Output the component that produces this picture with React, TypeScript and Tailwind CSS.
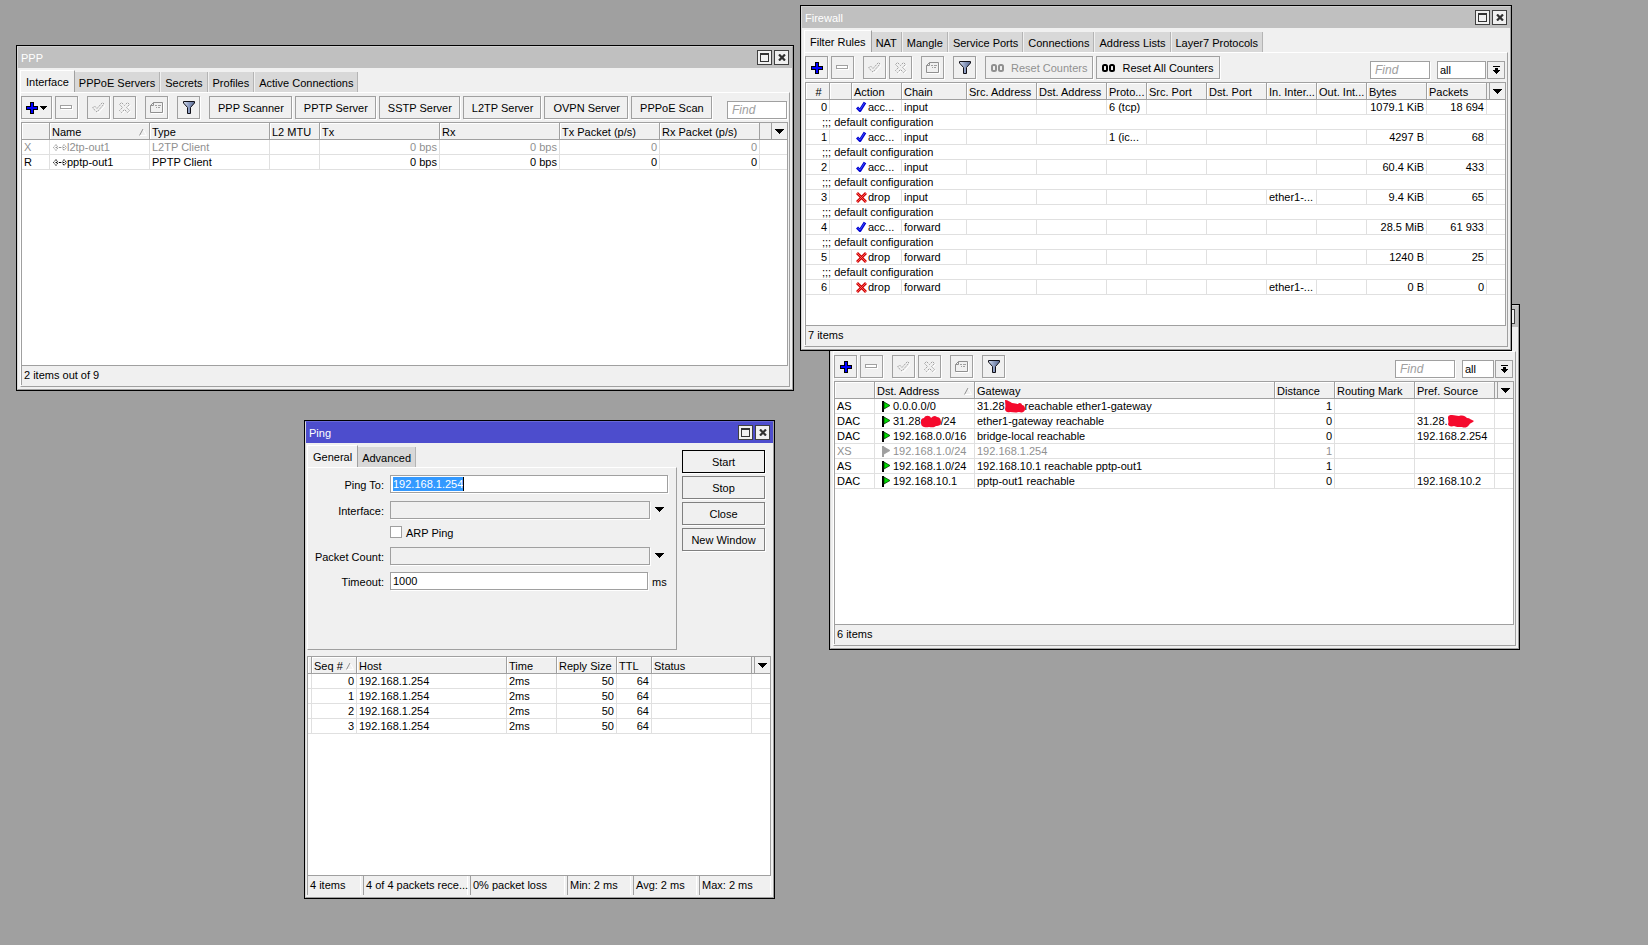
import type { ReactNode } from "react";

/* ---------- icons ---------- */

const PlusIcon = () => (
  <svg width="12" height="12" viewBox="0 0 12 12" shapeRendering="crispEdges" aria-hidden="true">
    <path d="M4 0h4v4h4v4H8v4H4V8H0V4h4z" fill="#000" />
    <path d="M5 1h2v4h4v2H7v4H5V7H1V5h4z" fill="#0000ff" />
  </svg>
);

const MinusIcon = () => (
  <svg width="13" height="5" viewBox="0 0 13 5" shapeRendering="crispEdges" aria-hidden="true">
    <path d="M1 1h12v4H1z" fill="#fff" />
    <path d="M0 0h12v4H0zM1 1v2h10V1z" fill="#a0a0a0" fillRule="evenodd" />
  </svg>
);

const EnableIcon = () => (
  <svg width="13" height="12" viewBox="0 0 13 12" aria-hidden="true">
    <path d="M1.500 6.500l2-1.500L5.500 7 10 1.500l2 1L5.500 10z" transform="translate(1 1)" stroke="#fff" fill="none" />
    <path d="M.5 6l2-2L5 6.500 10.500 .5l1.500 1.500L5 10z" fill="#f0f0f0" stroke="#a0a0a0" strokeDasharray="2 1" />
  </svg>
);

const DisableIcon = () => (
  <svg width="12" height="12" viewBox="0 0 12 12" aria-hidden="true">
    <path d="M1.500 3.500l2-2 3 3 3-3 2 2-3 3 3 3-2 2-3-3-3 3-2-2 3-3z" fill="none" stroke="#fff" />
    <path d="M.5 2.500l2-2 3 3 3-3 2 2-3 3 3 3-2 2-3-3-3 3-2-2 3-3z" fill="#f0f0f0" stroke="#a0a0a0" strokeDasharray="2 1" />
  </svg>
);

const CommentIcon = () => (
  <svg width="14" height="12" viewBox="0 0 14 12" aria-hidden="true">
    <path d="M3.500 .5h9v10H.5V3.500z" fill="#f0f0f0" stroke="#909090" />
    <path d="M3.500 .5v3h-3" fill="none" stroke="#909090" />
    <path d="M13.500 1v10.500H1" fill="none" stroke="#fff" />
    <path d="M5 3.500h2M8 3.500h3M6 5.500h1M8 5.500h2" stroke="#a0a0a0" />
  </svg>
);

const FunnelIcon = () => (
  <svg width="12" height="13" viewBox="0 0 12 13" aria-hidden="true">
    <defs>
      <linearGradient id="funnel" x1="0" x2="1" y1="0" y2="0">
        <stop offset="0" stopColor="#d8e0f0" />
        <stop offset=".5" stopColor="#8c9cc0" />
        <stop offset="1" stopColor="#5c6c94" />
      </linearGradient>
    </defs>
    <path d="M.5 .5h11v1.500L7.500 6.500v6h-3v-6L.5 2z" fill="url(#funnel)" stroke="#101018" />
  </svg>
);

const Caret = () => (
  <svg width="9" height="5" viewBox="0 0 9 5" shapeRendering="crispEdges" aria-hidden="true">
    <path d="M0 0h9v1H8v1H7v1H6v1H5v1H4V4H3V3H2V2H1V1H0z" />
  </svg>
);

const SmallCaret = () => (
  <svg width="7" height="4" viewBox="0 0 7 4" shapeRendering="crispEdges" aria-hidden="true">
    <path d="M0 0h7v1H6v1H5v1H4v1H3V3H2V2H1V1H0z" />
  </svg>
);

const BarCaret = () => (
  <svg width="7" height="8" viewBox="0 0 7 8" shapeRendering="crispEdges" aria-hidden="true">
    <path d="M0 0h7v1H0zM2 2h3v2h2v1H6v1H5v1H4v1H3V7H2V6H1V5H0V4h2z" />
  </svg>
);

const SortIcon = () => (
  <svg width="8" height="7" viewBox="0 0 8 7" aria-hidden="true" className="shrink-0">
    <path d="M4 0L7.500 6.500H0" fill="none" stroke="#fff" />
    <path d="M4 0L.5 6.500" stroke="#909090" />
  </svg>
);

const CountersIcon = () => (
  <svg width="14" height="8" viewBox="0 0 14 8" aria-hidden="true" className="shrink-0">
    <rect x="1" y="1" width="4" height="6" rx="1.500" fill="none" stroke="currentColor" strokeWidth="2" />
    <rect x="8" y="1" width="4" height="6" rx="1.500" fill="none" stroke="currentColor" strokeWidth="2" />
  </svg>
);

const LinkIcon = () => (
  <svg width="14" height="7" viewBox="0 0 14 7" aria-hidden="true" className="shrink-0">
    <path d="M3 .5l2 3-2 3-2.500-3zM11 .5l2.500 3-2.500 3-2-3z" fill="none" stroke="currentColor" strokeDasharray="1.400 .7" />
    <path d="M2.500 3.500h1.500M6 3.500h2M10 3.500h1.500" stroke="currentColor" />
  </svg>
);

const AcceptIcon = () => (
  <svg width="11" height="12" viewBox="0 0 11 12" aria-hidden="true" className="shrink-0">
    <path d="M1 6.500L4 9.500 9 1.500" fill="none" stroke="#0000d0" strokeWidth="3" strokeLinejoin="round" />
    <path d="M1.500 7L4 9 8.500 2" fill="none" stroke="#4a5cff" strokeWidth=".8" />
  </svg>
);

const DropIcon = () => (
  <svg width="11" height="11" viewBox="0 0 11 11" aria-hidden="true" className="shrink-0">
    <path d="M1 1l9 9M10 1L1 10" stroke="#d00000" strokeWidth="2.800" />
    <path d="M1 1l9 9M10 1L1 10" stroke="#ff7070" strokeWidth=".8" />
  </svg>
);

const FlagIcon = ({ off }: { off?: boolean }) => (
  <svg width="9" height="11" viewBox="0 0 9 11" aria-hidden="true" className="shrink-0">
    <path d="M0 0h2v11H0z" fill={off ? "#a0a0a0" : "#000"} />
    <path d="M2 1l6 3.500L2 8z" fill={off ? "#a0a0a0" : "#00dc00"} stroke={off ? "#a0a0a0" : "#003c00"} strokeWidth=".8" />
  </svg>
);

const Scribble = ({ d, w }: { d: string; w: number }) => (
  <svg width={w} height="13" viewBox={`0 0 ${w} 13`} aria-hidden="true" className="shrink-0">
    <path d={d} fill="#f50a2d" />
  </svg>
);

/* ---------- window parts ---------- */

const WindowButtons = () => (
  <div className="flex gap-0.5">
    <button aria-label="Maximize" className="flex size-[15px] items-center justify-center border border-[#404040] bg-[#f0f0f0]">
      <svg width="9" height="9" viewBox="0 0 9 9" shapeRendering="crispEdges" aria-hidden="true">
        <path d="M0 0h9v9H0zM1 2v6h7V2z" fill="#333" fillRule="evenodd" />
      </svg>
    </button>
    <button aria-label="Close" className="flex size-[15px] items-center justify-center border border-[#404040] bg-[#f0f0f0]">
      <svg width="8" height="7" viewBox="0 0 8 7" aria-hidden="true">
        <path d="M1 .5l6 6M7 .5l-6 6" stroke="#303030" strokeWidth="2.200" />
      </svg>
    </button>
  </div>
);

const Window = ({ title, place, active, children }: { title?: string; place: string; active?: boolean; children: ReactNode }) => (
  <section className={`absolute flex border border-black ${place}`}>
    <div className={`flex min-w-0 flex-1 flex-col border bg-[#f0f0f0] ${active ? "border-[#a0a0a0] border-t-[#6868d8] border-l-[#d8d8d8]" : "border-[#a0a0a0] border-t-[#d0d0d0] border-l-[#d8d8d8]"}`}>
      <header className={`flex h-[21px] shrink-0 items-center justify-between pr-[3px] pl-[3px] text-white ${active ? "bg-[#4d4dcd]" : "bg-[#c0c0c0]"}`}>
        <h2>{title}</h2>
        <WindowButtons />
      </header>
      {children}
    </div>
  </section>
);

const Tabs = ({ items }: { items: string[] }) => (
  <div role="tablist" className="flex h-[22px] shrink-0 items-end whitespace-nowrap">
    {items.map((t, i) =>
      i === 0 ? (
        <button key={t} role="tab" aria-selected="true" className="h-[22px] border-t border-r border-l border-white border-r-[#a0a0a0] px-[5px]">
          {t}
        </button>
      ) : (
        <button key={t} role="tab" aria-selected="false" className="mr-px h-5 border-r border-[#b4b4b4] bg-[#d8d8d8] pt-px pr-1 pl-1">
          {t}
        </button>
      )
    )}
  </div>
);

const ToolButton = ({ label, children, first }: { label: string; children: ReactNode; first?: boolean }) => (
  <button aria-label={label} className={`flex h-[23px] shrink-0 items-center justify-center gap-0.5 border border-[#a0a0a0] bg-[#f0f0f0] shadow-[1px_1px_0_#fff] ${first ? "w-[31px]" : "w-[23px]"}`}>
    {children}
  </button>
);

const TextButton = ({ children, off, icon }: { children: ReactNode; off?: boolean; icon?: boolean }) => (
  <button disabled={off} className={`flex h-[23px] shrink-0 items-center gap-1.5 border border-[#a0a0a0] bg-[#f0f0f0] whitespace-nowrap shadow-[1px_1px_0_#fff] ${icon ? "px-[5px]" : "pr-[7px] pl-2"} ${off ? "text-[#909090]" : ""}`}>
    {children}
  </button>
);

const Toolbar = ({ menu, children, filter }: { menu?: boolean; children?: ReactNode; filter?: string }) => (
  <div className="flex shrink-0 items-end justify-between pt-[3px] pb-[3px]">
    <div className="flex gap-[9px]">
      <div className="flex gap-[3px]">
        <ToolButton label="Add" first={menu}>
          <PlusIcon />
          {menu && <SmallCaret />}
        </ToolButton>
        <ToolButton label="Remove"><MinusIcon /></ToolButton>
      </div>
      <div className="flex gap-[3px]">
        <ToolButton label="Enable"><EnableIcon /></ToolButton>
        <ToolButton label="Disable"><DisableIcon /></ToolButton>
      </div>
      <ToolButton label="Comment"><CommentIcon /></ToolButton>
      <ToolButton label="Filter"><FunnelIcon /></ToolButton>
      <div className="flex gap-[3px]">{children}</div>
    </div>
    <div className="flex pr-0.5">
      <input aria-label="Find" placeholder="Find" className="h-[18px] w-[60px] border border-[#a0a0a0] bg-white px-1 text-[12px] italic shadow-[1px_1px_0_#fff] outline-none placeholder:text-[#a0a0a0]" />
      {filter && (
        <>
          <select aria-label="Filter by" className={`ml-[7px] h-[18px] appearance-none border border-[#a0a0a0] bg-white pl-0.5 leading-4 ${filter}`}>
            <option>all</option>
          </select>
          <button aria-label="Open list" className="ml-px flex h-[18px] w-[18px] items-center justify-center border border-[#a0a0a0]">
            <BarCaret />
          </button>
        </>
      )}
    </div>
  </div>
);

type Col = { h: ReactNode; w: string; right?: boolean; sort?: boolean; center?: boolean };
type Row = { cells: ReactNode[]; off?: boolean } | { note: string };

const DataTable = ({ cols, rows, label }: { cols: Col[]; rows: Row[]; label: string }) => (
  <div className="min-h-0 flex-1 overflow-hidden border border-[#a0a0a0] bg-white">
    <table aria-label={label} className="w-full table-fixed border-separate border-spacing-0 whitespace-nowrap">
      <colgroup>
        {cols.map((c, i) => (
          <col key={i} className={c.w} />
        ))}
        <col />
      </colgroup>
      <thead>
        <tr>
          {cols.map((c, i) => (
            <th key={i} className="h-[17px] border-r border-b border-[#a0a0a0] bg-[#f0f0f0] p-0 text-left font-normal shadow-[inset_1px_1px_0_#fff]">
              <div className={`flex h-4 items-center pt-0.5 pl-0.5 leading-[14px] ${c.sort ? "justify-between pr-0.5" : ""} ${c.center ? "justify-center" : ""}`}>
                <span>{c.h}</span>
                {c.sort && <SortIcon />}
              </div>
            </th>
          ))}
          <th className="h-[17px] border-b border-[#a0a0a0] bg-[#f0f0f0] p-0">
            <button aria-label="Choose columns" className="ml-auto flex h-4 w-4 items-center justify-center border-l border-[#a0a0a0]">
              <Caret />
            </button>
          </th>
        </tr>
      </thead>
      <tbody>
        {rows.map((r, i) =>
          "note" in r ? (
            <tr key={i}>
              <td colSpan={cols.length + 1} className="h-[15px] border-b border-[#e0e0e0] p-0 pl-4 leading-[14px]">
                {r.note}
              </td>
            </tr>
          ) : (
            <tr key={i} className={r.off ? "text-[#909090]" : ""}>
              {cols.map((c, j) => (
                <td key={j} className={`h-[15px] border-r border-b border-[#e0e0e0] p-0 leading-[14px] ${c.right ? "pr-0.5 text-right" : "pl-0.5"}`}>
                  {r.cells[j]}
                </td>
              ))}
              <td className="h-[15px] border-b border-[#e0e0e0] p-0" />
            </tr>
          )
        )}
      </tbody>
    </table>
  </div>
);

const TabbedBody = ({ tabs, toolbar, table, status }: { tabs: string[]; toolbar: ReactNode; table: ReactNode; status: string }) => (
  <div className="flex min-h-0 flex-1 flex-col px-0.5 pt-0.5 pb-0.5">
    <Tabs items={tabs} />
    <div className="flex min-h-0 flex-1 flex-col border border-white border-r-[#a0a0a0] border-b-[#a0a0a0]">
      {toolbar}
      <div className="mr-px mb-px flex min-h-0 flex-1 flex-col">
        {table}
        <footer className="h-[19px] shrink-0 border-l border-[#a0a0a0] pl-0.5 leading-[19px]">{status}</footer>
      </div>
    </div>
  </div>
);

/* ---------- data ---------- */

const pppCols: Col[] = [
  { h: "", w: "w-[28px]" },
  { h: "Name", w: "w-[100px]", sort: true },
  { h: "Type", w: "w-[120px]" },
  { h: "L2 MTU", w: "w-[50px]" },
  { h: "Tx", w: "w-[120px]", right: true },
  { h: "Rx", w: "w-[120px]", right: true },
  { h: "Tx Packet (p/s)", w: "w-[100px]", right: true },
  { h: "Rx Packet (p/s)", w: "w-[100px]", right: true },
];

const iface = (name: string) => (
  <span className="flex items-center pl-px">
    <LinkIcon />
    {name}
  </span>
);

const pppRows: Row[] = [
  { off: true, cells: ["X", iface("l2tp-out1"), "L2TP Client", "", "0 bps", "0 bps", "0", "0"] },
  { cells: ["R", iface("pptp-out1"), "PPTP Client", "", "0 bps", "0 bps", "0", "0"] },
];

const fwCols: Col[] = [
  { h: "#", w: "w-[24px]", right: true, center: true },
  { h: "", w: "w-[22px]" },
  { h: "Action", w: "w-[50px]" },
  { h: "Chain", w: "w-[65px]" },
  { h: "Src. Address", w: "w-[70px]" },
  { h: "Dst. Address", w: "w-[70px]" },
  { h: "Proto...", w: "w-[40px]" },
  { h: "Src. Port", w: "w-[60px]" },
  { h: "Dst. Port", w: "w-[60px]" },
  { h: "In. Inter...", w: "w-[50px]" },
  { h: "Out. Int...", w: "w-[50px]" },
  { h: "Bytes", w: "w-[60px]", right: true },
  { h: "Packets", w: "w-[60px]", right: true },
];

const accept = <span className="flex h-[14px] items-center gap-px pl-0.5"><AcceptIcon />acc...</span>;
const drop = <span className="flex h-[14px] items-center gap-px pl-0.5"><DropIcon />drop</span>;
const rule = (n: string, action: ReactNode, chain: string, proto: string, inIf: string, bytes: string, packets: string): Row => ({
  cells: [n, "", action, chain, "", "", proto, "", "", inIf, "", bytes, packets],
});
const note: Row = { note: ";;; default configuration" };

const fwRows: Row[] = [
  rule("0", accept, "input", "6 (tcp)", "", "1079.1 KiB", "18 694"),
  note,
  rule("1", accept, "input", "1 (ic...", "", "4297 B", "68"),
  note,
  rule("2", accept, "input", "", "", "60.4 KiB", "433"),
  note,
  rule("3", drop, "input", "", "ether1-...", "9.4 KiB", "65"),
  note,
  rule("4", accept, "forward", "", "", "28.5 MiB", "61 933"),
  note,
  rule("5", drop, "forward", "", "", "1240 B", "25"),
  note,
  rule("6", drop, "forward", "", "ether1-...", "0 B", "0"),
];

const routeCols: Col[] = [
  { h: "", w: "w-[40px]" },
  { h: "Dst. Address", w: "w-[100px]", sort: true },
  { h: "Gateway", w: "w-[300px]" },
  { h: "Distance", w: "w-[60px]", right: true },
  { h: "Routing Mark", w: "w-[80px]" },
  { h: "Pref. Source", w: "w-[80px]" },
];

const dst = (children: ReactNode, off?: boolean) => (
  <span className="flex h-[14px] items-center">
    <span className="flex w-4 shrink-0 justify-end pr-0.5"><FlagIcon off={off} /></span>
    {children}
  </span>
);

const routeRows: Row[] = [
  {
    cells: [
      "AS",
      dst("0.0.0.0/0"),
      <span className="flex h-[14px] items-center">
        31.28
        <Scribble w={20} d="M0 0C3 0 5 2 7 3c3 0 4 1 6 1 1-2 4-1 4 1 2 0 3 2 3 4 0 3-3 4-6 3-4 1-6 0-9 0-3 1-5-1-5-3 1-3 0-6 0-9z" />
        reachable ether1-gateway
      </span>,
      "1",
      "",
      "",
    ],
  },
  {
    cells: [
      "DAC",
      dst(
        <>
          31.28
          <Scribble w={20} d="M0 8C-1 5 1 3 3 3 4 0 9 0 10 3c2-2 4-3 6-1 3 0 4 3 4 5 0 3-2 4-5 4-2 2-5 1-7 1-4 1-8 0-8-4z" />
          /24
        </>
      ),
      "ether1-gateway reachable",
      "0",
      "",
      <span className="flex h-[14px] items-center">
        31.28.
        <Scribble w={26} d="M0 3C0 0 2 0 4 0c3 0 4 1 7 1 4-1 6 0 8 2 3 0 4 2 7 3-2 2-4 2-5 4-2 3-5 3-7 2-4 0-6 0-8-1-3 1-6 0-6-2 1-2 0-4 0-6z" />
      </span>,
    ],
  },
  { cells: ["DAC", dst("192.168.0.0/16"), "bridge-local reachable", "0", "", "192.168.2.254"] },
  { off: true, cells: ["XS", dst("192.168.1.0/24", true), "192.168.1.254", "1", "", ""] },
  { cells: ["AS", dst("192.168.1.0/24"), "192.168.10.1 reachable pptp-out1", "1", "", ""] },
  { cells: ["DAC", dst("192.168.10.1"), "pptp-out1 reachable", "0", "", "192.168.10.2"] },
];

const pingCols: Col[] = [
  { h: "", w: "w-[4px]" },
  { h: "Seq #", w: "w-[45px]", right: true, sort: true },
  { h: "Host", w: "w-[150px]" },
  { h: "Time", w: "w-[50px]" },
  { h: "Reply Size", w: "w-[60px]", right: true },
  { h: "TTL", w: "w-[35px]", right: true },
  { h: "Status", w: "w-[100px]" },
];

const pingRows: Row[] = ["0", "1", "2", "3"].map((n) => ({ cells: ["", n, "192.168.1.254", "2ms", "50", "64", ""] }));

const pingStatus = [
  { t: "4 items", w: "w-[54px]" },
  { t: "4 of 4 packets rece...", w: "w-[105px]" },
  { t: "0% packet loss", w: "w-[95px]" },
  { t: "Min: 2 ms", w: "w-16" },
  { t: "Avg: 2 ms", w: "w-16" },
  { t: "Max: 2 ms", w: "flex-1" },
];

const field = "h-[18px] border border-[#a0a0a0] shadow-[1px_1px_0_#fff]";
const caption = "text-right leading-[20px] whitespace-nowrap";

/* ---------- page ---------- */

export default function App() {
  return (
    <main className="relative min-h-screen overflow-hidden bg-[#a0a0a0] font-['Liberation_Sans',Arial,sans-serif] text-[11px] leading-[14px] text-black">
      <Window title="PPP" place="left-[16px] top-[45px] h-[346px] w-[778px]">
        <TabbedBody
          tabs={["Interface", "PPPoE Servers", "Secrets", "Profiles", "Active Connections"]}
          toolbar={
            <Toolbar menu>
              {["PPP Scanner", "PPTP Server", "SSTP Server", "L2TP Server", "OVPN Server", "PPPoE Scan"].map((t) => (
                <TextButton key={t}>{t}</TextButton>
              ))}
            </Toolbar>
          }
          table={<DataTable label="PPP interfaces" cols={pppCols} rows={pppRows} />}
          status="2 items out of 9"
        />
      </Window>

      <Window place="left-[829px] top-[304px] h-[346px] w-[691px]">
        <TabbedBody
          tabs={[]}
          toolbar={<Toolbar filter="w-[32px]" />}
          table={<DataTable label="Routes" cols={routeCols} rows={routeRows} />}
          status="6 items"
        />
      </Window>

      <Window title="Firewall" place="left-[800px] top-[5px] h-[346px] w-[712px]">
        <TabbedBody
          tabs={["Filter Rules", "NAT", "Mangle", "Service Ports", "Connections", "Address Lists", "Layer7 Protocols"]}
          toolbar={
            <Toolbar filter="w-[49px]">
              <TextButton off icon><CountersIcon />Reset Counters</TextButton>
              <TextButton icon><CountersIcon />Reset All Counters</TextButton>
            </Toolbar>
          }
          table={<DataTable label="Filter rules" cols={fwCols} rows={fwRows} />}
          status="7 items"
        />
      </Window>

      <Window active title="Ping" place="left-[304px] top-[420px] h-[479px] w-[471px]">
        <div className="flex min-h-0 flex-1 flex-col pt-0.5 pr-0.5 pl-px">
          <div className="flex">
            <div className="flex min-w-0 flex-1 flex-col">
              <Tabs items={["General", "Advanced"]} />
              <form className="grid h-[183px] grid-cols-[76px_1fr] content-start gap-x-1.5 border border-white border-r-[#a0a0a0] border-b-[#a0a0a0] pt-[7px] pr-2">
                <label htmlFor="ping-to" className={`h-[26px] ${caption}`}>Ping To:</label>
                <div className={`flex items-center bg-white pl-0.5 ${field}`}>
                  <input id="ping-to" defaultValue="192.168.1.254" className="h-[14px] border-r border-black bg-[#3399ff] text-white outline-none [field-sizing:content]" />
                </div>
                <label htmlFor="ping-interface" className={`h-[25px] ${caption}`}>Interface:</label>
                <div className="flex items-start gap-[5px]">
                  <select id="ping-interface" className={`w-[260px] appearance-none bg-[#f0f0f0] ${field}`} />
                  <button type="button" aria-label="Show interfaces" className="flex h-4 items-center"><Caret /></button>
                </div>
                <span />
                <label className="flex h-[21px] items-start gap-1">
                  <input type="checkbox" className="size-3 appearance-none border border-[#a0a0a0] bg-white" />
                  ARP Ping
                </label>
                <label htmlFor="ping-count" className={`h-[25px] ${caption}`}>Packet Count:</label>
                <div className="flex items-start gap-[5px]">
                  <select id="ping-count" className={`w-[260px] appearance-none bg-[#f0f0f0] ${field}`} />
                  <button type="button" aria-label="Set packet count" className="flex h-4 items-center"><Caret /></button>
                </div>
                <label htmlFor="ping-timeout" className={`h-[25px] ${caption}`}>Timeout:</label>
                <div className="flex items-start gap-1">
                  <input id="ping-timeout" defaultValue="1000" className={`w-[258px] bg-white px-0.5 ${field}`} />
                  <span className="leading-[20px]">ms</span>
                </div>
              </form>
            </div>
            <div className="flex flex-col gap-[3px] pt-[5px] pr-1.5 pl-[5px]">
              {["Start", "Stop", "Close", "New Window"].map((t, i) => (
                <button key={t} className={`h-[23px] w-[83px] border shadow-[1px_1px_0_#fff] ${i === 0 ? "border-black" : "border-[#808080]"}`}>
                  {t}
                </button>
              ))}
            </div>
          </div>
          <div className="flex min-h-0 flex-1 flex-col pt-1.5">
            <DataTable label="Ping replies" cols={pingCols} rows={pingRows} />
            <footer className="mb-0.5 flex h-[19px] shrink-0 gap-0.5">
              {pingStatus.map((s) => (
                <span key={s.t} className={`border-r border-l border-white border-l-[#a0a0a0] pl-0.5 leading-[19px] whitespace-nowrap ${s.w}`}>
                  {s.t}
                </span>
              ))}
            </footer>
          </div>
        </div>
      </Window>
    </main>
  );
}
